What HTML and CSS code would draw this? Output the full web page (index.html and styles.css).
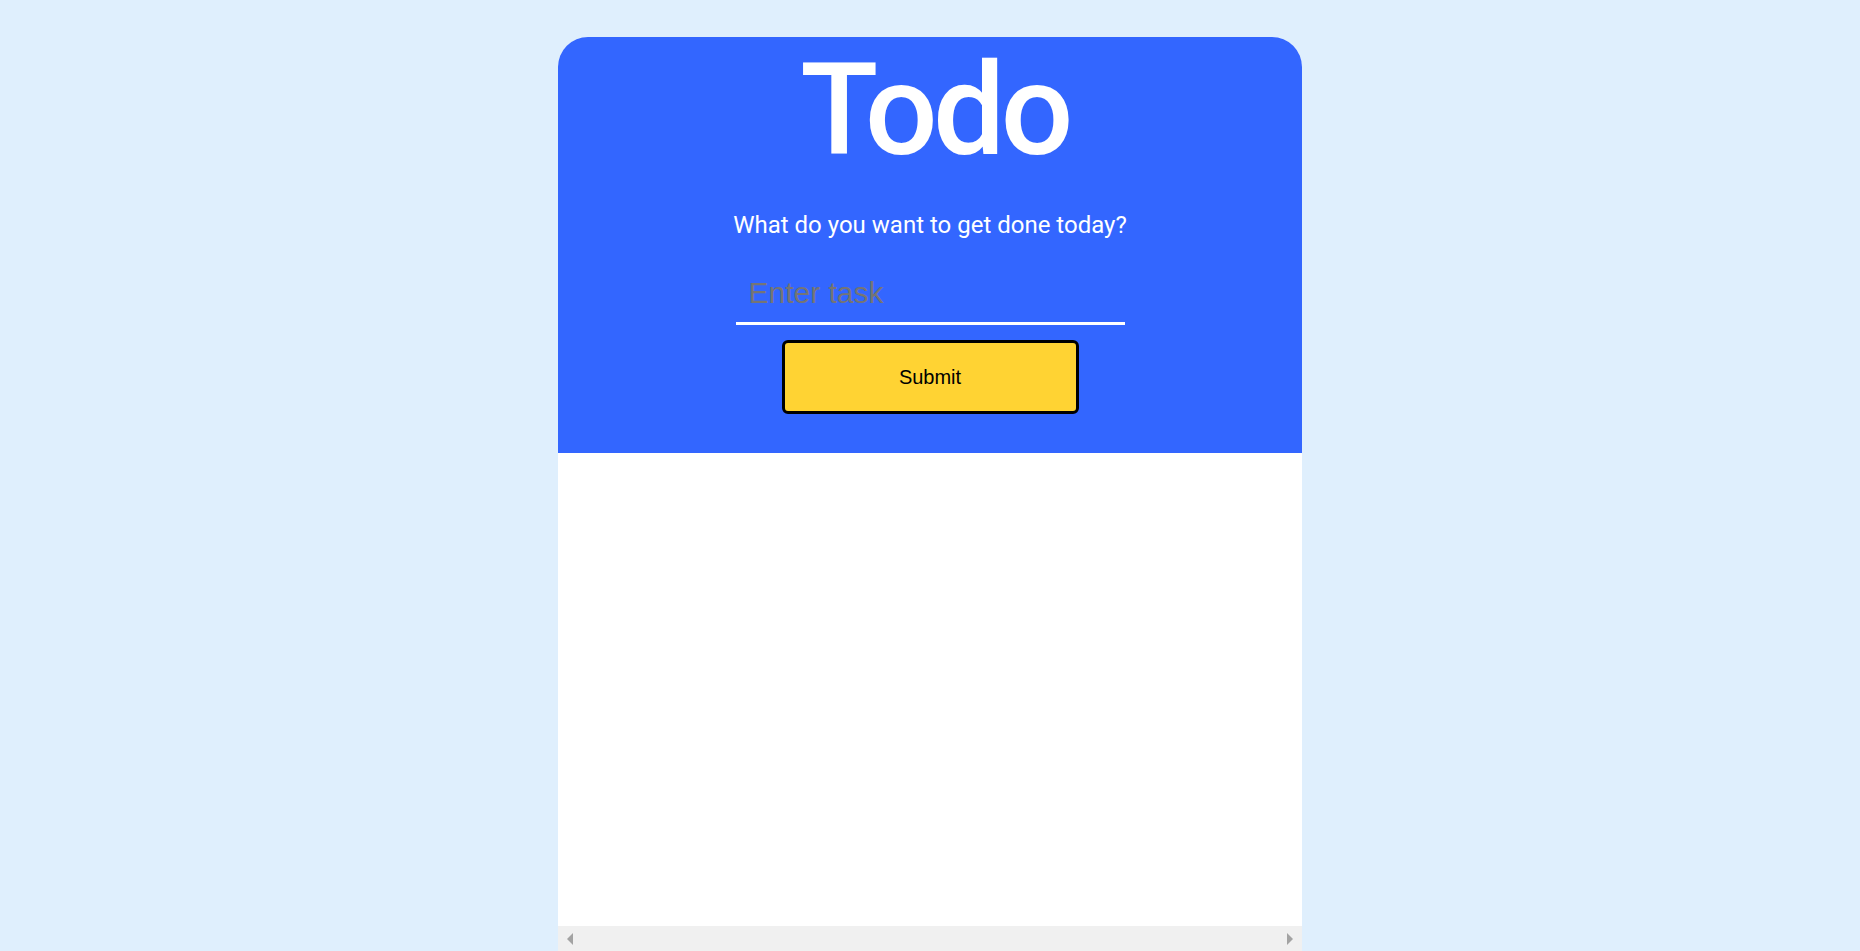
FILE: index.html
```html
<!DOCTYPE html>
<html lang="en">
<head>
<meta charset="utf-8">
<title>Todo</title>
<link rel="stylesheet" href="styles.css">
</head>
<body>
  <main class="card">
    <header class="hero">
      <h1 class="title">Todo</h1>
      <p class="subtitle">What do you want to get done today?</p>
      <form class="task-form">
        <input class="task-input" type="text" placeholder="Enter task">
        <button class="submit-btn" type="button">Submit</button>
      </form>
    </header>
    <section class="list"></section>
    <div class="hscroll">
      <span class="arrow arrow-left"></span>
      <span class="arrow arrow-right"></span>
    </div>
  </main>
</body>
</html>
```

FILE: styles.css
```css
html, body {
  margin: 0;
  padding: 0;
  height: 100%;
}

body {
  background: #dfeffd;
  overflow: hidden;
  font-family: Roboto, "Liberation Sans", sans-serif;
}

.card {
  width: 744px;
  margin: 37px auto 0;
  height: calc(100vh - 37px);
  display: flex;
  flex-direction: column;
  background: #ffffff;
  border-radius: 30px 30px 0 0;
  overflow: hidden;
}

.hero {
  background: #3366ff;
  display: flex;
  flex-direction: column;
  align-items: center;
  padding: 9px 0 39px;
}

.title {
  margin: 0;
  padding-left: 9px;
  font-family: Roboto, sans-serif;
  font-weight: 500;
  font-size: 128px;
  line-height: 128px;
  letter-spacing: -4.5px;
  color: #ffffff;
}

.subtitle {
  margin: 37px 0 0;
  font-family: Roboto, sans-serif;
  font-size: 24px;
  line-height: 28px;
  color: #ffffff;
}

.task-form {
  display: flex;
  flex-direction: column;
  align-items: center;
}

.task-input {
  box-sizing: border-box;
  width: 389px;
  height: 86px;
  margin-top: 0;
  padding: 37px 13px 12px;
  border: none;
  border-bottom: 3px solid #ffffff;
  background: transparent;
  font-family: "Liberation Sans", Arial, sans-serif;
  font-size: 30px;
  color: #ffffff;
  outline: none;
}

.task-input::placeholder {
  color: #757575;
}

.submit-btn {
  box-sizing: border-box;
  width: 297px;
  height: 74px;
  margin-top: 15px;
  background: #ffd333;
  border: 3px solid #000000;
  border-radius: 6px;
  font-family: "Liberation Sans", Arial, sans-serif;
  font-size: 20px;
  color: #000000;
}

.list {
  flex: 1;
}

.hscroll {
  height: 25px;
  flex-shrink: 0;
  background: #f0f0f0;
  display: flex;
  align-items: center;
  justify-content: space-between;
  padding: 0 9px;
}

.arrow {
  width: 0;
  height: 0;
  border-top: 6px solid transparent;
  border-bottom: 6px solid transparent;
}

.arrow-left {
  border-right: 6px solid #a3a3a3;
}

.arrow-right {
  border-left: 6px solid #a3a3a3;
}
```
